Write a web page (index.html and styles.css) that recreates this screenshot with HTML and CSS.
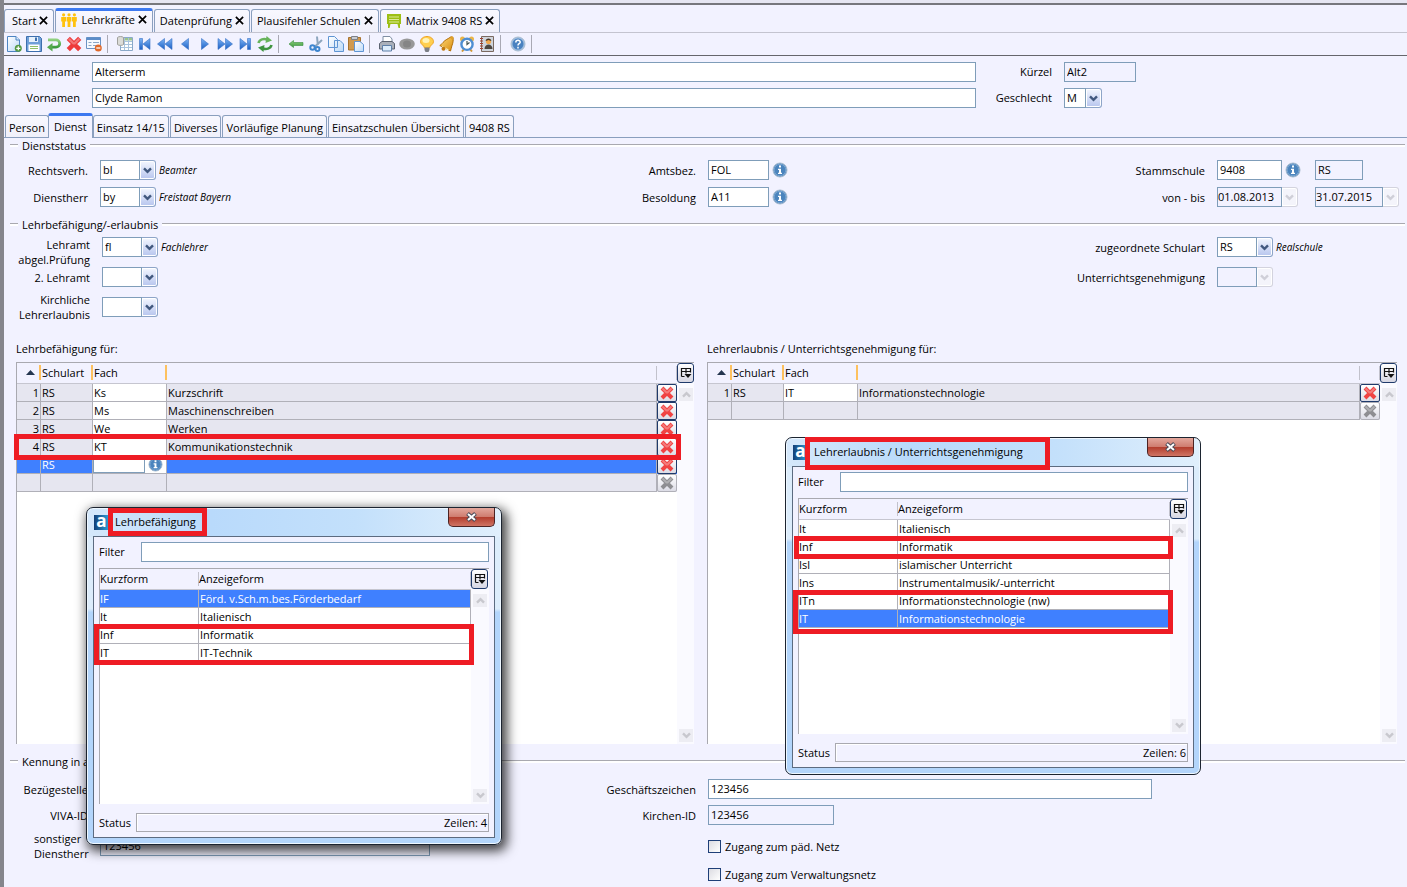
FILE: index.html
```html
<!DOCTYPE html>
<html lang="de">
<head>
<meta charset="utf-8">
<title>Lehrkräfte</title>
<link rel="stylesheet" href="styles.css">
</head>
<body>
<svg class="defs" aria-hidden="true">
  <defs>
    <linearGradient id="g-blue" x1="0" y1="0" x2="0" y2="1"><stop offset="0" stop-color="#7db4f5"/><stop offset="1" stop-color="#1a5fc4"/></linearGradient>
    <linearGradient id="g-page" x1="0" y1="0" x2="1" y2="1"><stop offset="0" stop-color="#ffffff"/><stop offset="1" stop-color="#bcd9f7"/></linearGradient>
    <linearGradient id="g-green" x1="0" y1="0" x2="0" y2="1"><stop offset="0" stop-color="#8fd07e"/><stop offset="1" stop-color="#3a9a3c"/></linearGradient>
    <linearGradient id="g-gold" x1="0" y1="0" x2="1" y2="1"><stop offset="0" stop-color="#ffdc7a"/><stop offset="1" stop-color="#d98a0c"/></linearGradient>
    <symbol id="chev" viewBox="0 0 9 7"><path d="M1 1.3 4.5 4.8 8 1.3" fill="none" stroke="currentColor" stroke-width="2.4"/></symbol>
    <symbol id="close" viewBox="0 0 10 10"><path d="M1 1 9 9M9 1 1 9" stroke="#000" stroke-width="1.9"/></symbol>
    <symbol id="redx" viewBox="0 0 14 14"><path d="M2 2 12 12M12 2 2 12" stroke="currentColor" stroke-width="4"/><path d="M2.5 2.5 7 7M11.5 2.5 7 7" stroke="#fff" stroke-opacity=".3" stroke-width="2"/></symbol>
    <symbol id="cols" viewBox="0 0 12 12"><path d="M1.5 9.5v-8h9v4M1.5 4.5h9M6 1.5v5M1.5 9.5h3" fill="none" stroke="#111" stroke-width="1.2"/><path d="M4.5 7h7L8 11z" fill="#111"/></symbol>
    <symbol id="info" viewBox="0 0 16 16"><circle cx="8" cy="8" r="7" fill="#4b84bd" stroke="#a9bccf"/><circle cx="8" cy="8" r="5.8" fill="none" stroke="#7fa9d4" stroke-width=".8"/><path d="M7 3.5h2v2H7zM6 6.7h3v4h1v1.2H6v-1.2h1V8H6z" fill="#fff"/></symbol>
    <symbol id="sort" viewBox="0 0 9 5"><path d="M0 5 4.5 0 9 5z" fill="#25364f"/></symbol>
    <symbol id="people" viewBox="0 0 16 14"><g fill="#ffc20e"><circle cx="2.6" cy="1.8" r="1.6"/><circle cx="8" cy="1.8" r="1.6"/><circle cx="13.4" cy="1.8" r="1.6"/><path d="M.2 4h4.8v4.5H4V14H1.2V8.500H.2zM5.600 4h4.800v4.500h-1V14H6.600V8.500h-1zM11 4h4.800v4.500h-1V14H12V8.500h-1z"/></g></symbol>
    <symbol id="board" viewBox="0 0 16 14"><path d="M1 0h14v10H1zM2 10h2.500l-1 4H2zM11.500 10H14v4h-1.500z" fill="#9dbf15"/><path d="M3 3h10M3 5.500h10M3 8h10" stroke="#dcea9a"/></symbol>
    <symbol id="new" viewBox="0 0 16 16"><path d="M1.500.5h8.500l3.500 3.500v11.500h-12z" fill="url(#g-page)" stroke="#4d84c2"/><path d="M10 .5V4h3.500" fill="#dcecfb" stroke="#4d84c2"/><circle cx="12.300" cy="12.300" r="3.500" fill="#559a43"/><path d="M12.300 10.300v4M10.300 12.300h4" stroke="#fff" stroke-width="1.200"/></symbol>
    <symbol id="save" viewBox="0 0 16 16"><path d="M.5.500h13l2 2v13H.5z" fill="#6f9fd8" stroke="#3d6fae"/><path d="M3 1h9v5H3z" fill="#e6f0fb"/><path d="M9 1.500h2v3.500H9z" fill="#3d6fae"/><path d="M2.500 8.500h11V15h-11z" fill="#fff"/><path d="M4 10.500h8M4 12.500h8" stroke="#8fc06a"/></symbol>
    <symbol id="undo" viewBox="0 0 16 16"><path d="M2 3.800h8a3.400 3.400 0 0 1 0 7.400H5" fill="none" stroke="url(#g-green)" stroke-width="2.800"/><path d="M6.500 7v8.500L1 11.200z" fill="#55a94f"/></symbol>
    <symbol id="form" viewBox="0 0 16 16"><path d="M.5 1.500h14v11H.5z" fill="#f6f9fd" stroke="#6a93c4"/><path d="M.5 1.500h14v2.500H.5z" fill="#5b8cc8"/><path d="M2.500 6.500h3M7 6.500h6M2.500 9.500h3M7 9.500h4" stroke="#8aa6c6"/><circle cx="12.300" cy="12" r="3.500" fill="#e0692a"/><path d="M10.300 12h4" stroke="#fff" stroke-width="1.300"/></symbol>
    <symbol id="sheet" viewBox="0 0 16 16"><path d="M3.500 1.500h12v13h-12z" fill="#fff" stroke="#8aa9c9"/><path d="M8 2h7v2.500H8z" fill="#9cc58c"/><path d="M4 5.500h11M4 8.500h11M4 11.500h11M7.500 2v12M11.500 2v12" stroke="#a9c3dd"/><path d="M.5 1.500c1-1.300 5-1.300 6 0v7c-1 1.200-5 1.200-6 0z" fill="#dcdcd8" stroke="#a0a09c"/></symbol>
    <symbol id="first" viewBox="0 0 16 16"><path d="M2.500 2.500h3v11h-3zM13 2.500v11L6 8z" fill="url(#g-blue)" stroke="#3771c4" stroke-width=".6"/></symbol>
    <symbol id="rew" viewBox="0 0 16 16"><path d="M7.500 2.500v11L.5 8zM15 2.500v11L8 8z" fill="url(#g-blue)" stroke="#3771c4" stroke-width=".6"/></symbol>
    <symbol id="prev" viewBox="0 0 16 16"><path d="M11.500 2.500v11L4.500 8z" fill="url(#g-blue)" stroke="#3771c4" stroke-width=".6"/></symbol>
    <symbol id="next" viewBox="0 0 16 16"><path d="M4.500 2.500v11L11.500 8z" fill="url(#g-blue)" stroke="#3771c4" stroke-width=".6"/></symbol>
    <symbol id="fwd" viewBox="0 0 16 16"><path d="M1 2.500v11L8 8zM8.500 2.500v11l7-5.500z" fill="url(#g-blue)" stroke="#3771c4" stroke-width=".6"/></symbol>
    <symbol id="last" viewBox="0 0 16 16"><path d="M3 2.500v11L10 8zM10.500 2.500h3v11h-3z" fill="url(#g-blue)" stroke="#3771c4" stroke-width=".6"/></symbol>
    <symbol id="refresh" viewBox="0 0 16 16"><path d="M1.500 7C2.500 3 7 2.500 10 3.500" fill="none" stroke="#68b35c" stroke-width="2.600"/><path d="M9.500 0 15 4.500 8.500 7z" fill="#68b35c"/><path d="M14.500 9c-1 4-5.500 4.500-8.500 3.500" fill="none" stroke="#3f9440" stroke-width="2.600"/><path d="M6.500 16 1 11.500 7.500 9z" fill="#3f9440"/></symbol>
    <symbol id="back" viewBox="0 0 16 16"><path d="M1 8 5.500 4.500v2H15v3H5.500v2z" fill="url(#g-green)" stroke="#3b8f3f" stroke-width=".6"/></symbol>
    <symbol id="cut" viewBox="0 0 16 16"><path d="M9 .5 9.800 9M14 4 7 10.500" stroke="#8da5bd" stroke-width="2"/><circle cx="4.500" cy="11.500" r="2.200" fill="none" stroke="#3f86cf" stroke-width="2"/><circle cx="9.500" cy="13" r="2" fill="none" stroke="#3f86cf" stroke-width="2"/></symbol>
    <symbol id="copy" viewBox="0 0 16 16"><path d="M.5.500h6l3 3v8h-9zM6.500 4.500h5.500l3.500 3.500v7.500h-9z" fill="url(#g-page)" stroke="#5f95d3"/></symbol>
    <symbol id="paste" viewBox="0 0 16 16"><path d="M.5 1.500h12v12.500H.5z" fill="#d09a4f" stroke="#a8742f"/><path d="M3.500.5h6v3h-6z" fill="#c9ccd2" stroke="#7d8087"/><path d="M6.500 5.500h5.500l3.500 3v7h-9z" fill="url(#g-page)" stroke="#5f95d3"/></symbol>
    <symbol id="print" viewBox="0 0 16 16"><path d="M4 .5h7l2 2.500v4H4z" fill="#fff" stroke="#7f8fa3"/><path d="M.500 7.500 3 5.500h10l2.500 2v5.500H.500z" fill="#aab0ba" stroke="#5b6270"/><path d="M3.500 9.500h9v5.500h-9z" fill="#dcecfb" stroke="#5f80a8"/></symbol>
    <symbol id="oval" viewBox="0 0 16 16"><ellipse cx="8" cy="8" rx="7.800" ry="5.500" fill="#989898"/><ellipse cx="8" cy="8" rx="4" ry="3.500" fill="#858585"/></symbol>
    <symbol id="bulb" viewBox="0 0 16 16"><path d="M8 .5c4 0 6.500 2.500 6.500 5.200C14.500 8.500 11 9 10.500 12h-5C5 9 1.500 8.500 1.500 5.700 1.500 3 4 .5 8 .5z" fill="#ffcf4f" stroke="#eea426"/><ellipse cx="7" cy="4.500" rx="3.500" ry="2.500" fill="#fff3b8"/><path d="M5.500 11.500h5V14L9.500 16h-3l-1-2z" fill="#7c7f86"/></symbol>
    <symbol id="bell" viewBox="0 0 16 16"><path d="M12 .8C9 3 6.500 3.500 4 6.500 3 8 2 8.500.8 9.500L11.500 15c.8-1.500.5-3 1.300-5C14 7 14.500 4.500 14 1.500z" fill="url(#g-gold)" stroke="#b36f08"/><circle cx="13" cy="1.800" r="1.500" fill="#e0a02a"/><path d="M3 10.500 9.500 14" stroke="#fff0b0" stroke-width="1.200"/><circle cx="4.500" cy="12.800" r="2" fill="#c27a10"/></symbol>
    <symbol id="clock" viewBox="0 0 16 16"><circle cx="3.500" cy="3" r="2.500" fill="#eab548"/><circle cx="12.500" cy="3" r="2.500" fill="#eab548"/><path d="M3 15.500 5 13M13 15.500 11 13" stroke="#d09838" stroke-width="2"/><circle cx="8" cy="8.300" r="5.600" fill="#fff" stroke="#4e8ed2" stroke-width="2.400"/><path d="M8 5v3.500l2.500-2" fill="none" stroke="#455" stroke-width="1.200"/></symbol>
    <symbol id="contact" viewBox="0 0 16 16"><path d="M2.500.5h12v15h-12z" fill="#cfd4dc" stroke="#7a6960"/><path d="M1 2.500h3M1 5h3M1 7.500h3M1 10h3M1 12.500h3" stroke="#a0412f"/><circle cx="9.500" cy="5.500" r="2.600" fill="#f0a850"/><path d="M6.700 5C6.500 1.500 12.500 1.500 12.300 5L9.500 4z" fill="#432"/><path d="M5.500 13c0-6 8-6 8 0z" fill="#4d4641"/></symbol>
    <symbol id="help" viewBox="0 0 16 16"><circle cx="8" cy="8" r="7" fill="#9dbde0" stroke="#a9bccf"/><circle cx="8" cy="8" r="5.500" fill="#4a82c0"/><path d="M5.800 6.500c0-3 4.600-2.800 4.400-.2C10.100 7.800 8 7.700 8 9.500M8 10.800v1.700" fill="none" stroke="#fff" stroke-width="1.500"/></symbol>
  </defs>
</svg>

<div class="app">
  <nav class="tabs main-tabs">
    <button class="tab">Start<svg class="x"><use href="#close"/></svg></button>
    <button class="tab active"><svg class="tab-icon"><use href="#people"/></svg>Lehrkräfte<svg class="x"><use href="#close"/></svg></button>
    <button class="tab">Datenprüfung<svg class="x"><use href="#close"/></svg></button>
    <button class="tab">Plausifehler Schulen<svg class="x"><use href="#close"/></svg></button>
    <button class="tab"><svg class="tab-icon"><use href="#board"/></svg>Matrix 9408 RS<svg class="x"><use href="#close"/></svg></button>
  </nav>

  <div class="toolbar" role="toolbar">
    <button aria-label="Neu"><svg><use href="#new"/></svg></button>
    <button aria-label="Speichern"><svg><use href="#save"/></svg></button>
    <button aria-label="Rückgängig"><svg><use href="#undo"/></svg></button>
    <button aria-label="Löschen" class="red"><svg><use href="#redx"/></svg></button>
    <button aria-label="Maske leeren"><svg><use href="#form"/></svg></button>
    <span class="sep"></span>
    <button aria-label="Liste"><svg><use href="#sheet"/></svg></button>
    <button aria-label="Erster"><svg><use href="#first"/></svg></button>
    <button aria-label="Seite zurück"><svg><use href="#rew"/></svg></button>
    <button aria-label="Voriger"><svg><use href="#prev"/></svg></button>
    <button aria-label="Nächster"><svg><use href="#next"/></svg></button>
    <button aria-label="Seite vor"><svg><use href="#fwd"/></svg></button>
    <button aria-label="Letzter"><svg><use href="#last"/></svg></button>
    <button aria-label="Aktualisieren"><svg><use href="#refresh"/></svg></button>
    <span class="sep"></span>
    <button aria-label="Zurück"><svg><use href="#back"/></svg></button>
    <button aria-label="Ausschneiden"><svg><use href="#cut"/></svg></button>
    <button aria-label="Kopieren"><svg><use href="#copy"/></svg></button>
    <button aria-label="Einfügen"><svg><use href="#paste"/></svg></button>
    <span class="sep"></span>
    <button aria-label="Drucken"><svg><use href="#print"/></svg></button>
    <button aria-label="Ansicht"><svg><use href="#oval"/></svg></button>
    <button aria-label="Hinweis"><svg><use href="#bulb"/></svg></button>
    <button aria-label="Glocke"><svg><use href="#bell"/></svg></button>
    <button aria-label="Wecker"><svg><use href="#clock"/></svg></button>
    <button aria-label="Kontakte"><svg><use href="#contact"/></svg></button>
    <span class="sep"></span>
    <button aria-label="Hilfe"><svg><use href="#help"/></svg></button>
    <span class="sep"></span>
  </div>

  <div class="person">
    <label for="fam">Familienname</label><input id="fam" value="Alterserm">
    <label for="krz">Kürzel</label><input id="krz" class="ro w72" value="Alt2" readonly>
    <label for="vor">Vornamen</label><input id="vor" value="Clyde Ramon">
    <label for="ges">Geschlecht</label>
    <span class="combo small"><select id="ges"><option>M</option></select><span class="arrow"><svg><use href="#chev"/></svg></span></span>
  </div>

  <nav class="tabs sub-tabs">
    <button class="tab">Person</button>
    <button class="tab active">Dienst</button>
    <button class="tab">Einsatz 14/15</button>
    <button class="tab">Diverses</button>
    <button class="tab">Vorläufige Planung</button>
    <button class="tab">Einsatzschulen Übersicht</button>
    <button class="tab">9408 RS</button>
  </nav>

  <h2 class="legend">Dienststatus</h2>
  <div class="form status">
    <label for="rv">Rechtsverh.</label>
    <div class="field"><span class="combo"><select id="rv"><option>bl</option></select><span class="arrow"><svg><use href="#chev"/></svg></span></span><i>Beamter</i></div>
    <label for="amt">Amtsbez.</label>
    <div class="field"><input id="amt" class="w61" value="FOL"><button class="info" aria-label="Info"><svg><use href="#info"/></svg></button></div>
    <label for="stamm">Stammschule</label>
    <div class="field dates"><div><input id="stamm" class="w65" value="9408"><button class="info" aria-label="Info"><svg><use href="#info"/></svg></button></div><input class="ro w48" aria-label="Schulart" value="RS" readonly></div>
    <label for="dh">Dienstherr</label>
    <div class="field"><span class="combo"><select id="dh"><option>by</option></select><span class="arrow"><svg><use href="#chev"/></svg></span></span><i>Freistaat Bayern</i></div>
    <label for="bes">Besoldung</label>
    <div class="field"><input id="bes" class="w61" value="A11"><button class="info" aria-label="Info"><svg><use href="#info"/></svg></button></div>
    <label for="von">von - bis</label>
    <div class="field dates">
      <span class="combo off date"><select id="von" disabled><option>01.08.2013</option></select><span class="arrow"><svg><use href="#chev"/></svg></span></span>
      <span class="combo off date until"><select aria-label="bis" disabled><option>31.07.2015</option></select><span class="arrow"><svg><use href="#chev"/></svg></span></span>
    </div>
  </div>

  <h2 class="legend">Lehrbefähigung/-erlaubnis</h2>
  <div class="form teach">
    <label for="la1">Lehramt<br>abgel.Prüfung</label>
    <div class="field"><span class="combo"><select id="la1"><option>fl</option></select><span class="arrow"><svg><use href="#chev"/></svg></span></span><i>Fachlehrer</i></div>
    <label for="zs" class="c5">zugeordnete Schulart</label>
    <div class="field"><span class="combo"><select id="zs"><option>RS</option></select><span class="arrow"><svg><use href="#chev"/></svg></span></span><i>Realschule</i></div>
    <label for="la2" class="second">2. Lehramt</label>
    <div class="field"><span class="combo"><select id="la2"><option></option></select><span class="arrow"><svg><use href="#chev"/></svg></span></span></div>
    <label for="ug" class="c5">Unterrichtsgenehmigung</label>
    <div class="field"><span class="combo off"><select id="ug" disabled><option></option></select><span class="arrow"><svg><use href="#chev"/></svg></span></span></div>
    <label for="kl" class="church">Kirchliche<br>Lehrerlaubnis</label>
    <div class="field church"><span class="combo"><select id="kl"><option></option></select><span class="arrow"><svg><use href="#chev"/></svg></span></span></div>
  </div>

  <div class="panels">
    <section class="panel">
      <h3>Lehrbefähigung für:</h3>
      <div class="list">
        <div class="rows">
          <table class="grid">
            <colgroup><col class="k1"><col class="k2"><col class="k3"><col><col class="k5"></colgroup>
            <thead><tr><th class="mark sort"><svg><use href="#sort"/></svg></th><th class="mark">Schulart</th><th class="mark">Fach</th><th class="thin"></th><th class="thin"></th></tr></thead>
            <tbody>
              <tr><td class="n">1</td><td>RS</td><td class="w">Ks</td><td>Kurzschrift</td><td class="d"><button class="del" aria-label="Löschen"><svg><use href="#redx"/></svg></button></td></tr>
              <tr><td class="n">2</td><td>RS</td><td class="w">Ms</td><td>Maschinenschreiben</td><td class="d"><button class="del" aria-label="Löschen"><svg><use href="#redx"/></svg></button></td></tr>
              <tr><td class="n">3</td><td>RS</td><td class="w">We</td><td>Werken</td><td class="d"><button class="del" aria-label="Löschen"><svg><use href="#redx"/></svg></button></td></tr>
              <tr><td class="n">4</td><td>RS</td><td class="w">KT</td><td>Kommunikationstechnik</td><td class="d"><button class="del" aria-label="Löschen"><svg><use href="#redx"/></svg></button></td></tr>
              <tr class="sel"><td class="n"></td><td>RS</td><td class="w edit"><div><input aria-label="Fach"><button class="info" aria-label="Info"><svg><use href="#info"/></svg></button></div></td><td></td><td class="d"><button class="del" aria-label="Löschen"><svg><use href="#redx"/></svg></button></td></tr>
              <tr><td class="n"></td><td></td><td></td><td></td><td class="d"><button class="del grey" aria-label="Löschen" disabled><svg><use href="#redx"/></svg></button></td></tr>
            </tbody>
          </table>
        </div>
        <div class="side"><button class="colbtn" aria-label="Spalten"><svg><use href="#cols"/></svg></button><button class="sb up" aria-label="Nach oben"><svg><use href="#chev"/></svg></button><button class="sb" aria-label="Nach unten"><svg><use href="#chev"/></svg></button></div>
        <span class="frame f-row4"></span>
      </div>
    </section>
    <section class="panel">
      <h3>Lehrerlaubnis / Unterrichtsgenehmigung für:</h3>
      <div class="list">
        <div class="rows">
          <table class="grid">
            <colgroup><col class="k1"><col class="k2"><col class="k3"><col><col class="k5"></colgroup>
            <thead><tr><th class="mark sort"><svg><use href="#sort"/></svg></th><th class="mark">Schulart</th><th class="mark">Fach</th><th class="thin"></th><th class="thin"></th></tr></thead>
            <tbody>
              <tr><td class="n">1</td><td>RS</td><td class="w">IT</td><td>Informationstechnologie</td><td class="d"><button class="del" aria-label="Löschen"><svg><use href="#redx"/></svg></button></td></tr>
              <tr><td class="n"></td><td></td><td></td><td></td><td class="d"><button class="del grey" aria-label="Löschen" disabled><svg><use href="#redx"/></svg></button></td></tr>
            </tbody>
          </table>
        </div>
        <div class="side"><button class="colbtn" aria-label="Spalten"><svg><use href="#cols"/></svg></button><button class="sb up" aria-label="Nach oben"><svg><use href="#chev"/></svg></button><button class="sb" aria-label="Nach unten"><svg><use href="#chev"/></svg></button></div>
      </div>
    </section>
  </div>

  <h2 class="legend">Kennung in anderen Systemen</h2>
  <div class="form ids">
    <label for="bz" class="c1">Bezügestelle</label><div class="field"><input id="bz" class="w330"></div>
    <label for="gz">Geschäftszeichen</label><div class="field wide"><input id="gz" value="123456"></div>
    <label for="viva" class="c1">VIVA-ID</label><div class="field"><input id="viva" class="w330"></div>
    <label for="kid">Kirchen-ID</label><div class="field"><input id="kid" class="ro w126" value="123456" readonly></div>
    <label for="sd" class="c1 left">sonstiger<br>Dienstherr</label><div class="field"><input id="sd" class="ro w330" value="123456" readonly></div>
    <label class="check"><input type="checkbox">Zugang zum päd. Netz</label>
    <label class="check"><input type="checkbox">Zugang zum Verwaltungsnetz</label>
  </div>
</div>

<section class="dialog d1" role="dialog" aria-label="Lehrbefähigung">
  <header><span class="logo">a</span><span class="title">Lehrbefähigung</span><button class="winx" aria-label="Schließen"><svg viewBox="0 0 12 10"><path d="M2 1.500 10 8.500M10 1.500 2 8.500" stroke="#4b4b58" stroke-width="4"/><path d="M2.500 2 9.500 8M9.500 2 2.500 8" stroke="#fff" stroke-width="2"/></svg></button></header>
  <div class="inner">
    <div class="filter"><label for="f1">Filter</label><input id="f1"></div>
    <div class="list">
      <div class="rows">
        <table class="grid pick">
          <colgroup><col class="p1"><col></colgroup>
          <thead><tr><th class="thin">Kurzform</th><th class="thin">Anzeigeform</th></tr></thead>
          <tbody>
            <tr class="sel"><td>IF</td><td>Förd. v.Sch.m.bes.Förderbedarf</td></tr>
            <tr><td>It</td><td>Italienisch</td></tr>
            <tr><td>Inf</td><td>Informatik</td></tr>
            <tr><td>IT</td><td>IT-Technik</td></tr>
          </tbody>
        </table>
      </div>
      <div class="side"><button class="colbtn" aria-label="Spalten"><svg><use href="#cols"/></svg></button><button class="sb up" aria-label="Nach oben"><svg><use href="#chev"/></svg></button><button class="sb" aria-label="Nach unten"><svg><use href="#chev"/></svg></button></div>
      <span class="frame f-two"></span>
    </div>
    <div class="statusbar"><span>Status</span><output>Zeilen: 4</output></div>
  </div>
</section>

<section class="dialog d2" role="dialog" aria-label="Lehrerlaubnis / Unterrichtsgenehmigung">
  <header><span class="logo">a</span><span class="title">Lehrerlaubnis / Unterrichtsgenehmigung</span><button class="winx" aria-label="Schließen"><svg viewBox="0 0 12 10"><path d="M2 1.500 10 8.500M10 1.500 2 8.500" stroke="#4b4b58" stroke-width="4"/><path d="M2.500 2 9.500 8M9.500 2 2.500 8" stroke="#fff" stroke-width="2"/></svg></button></header>
  <div class="inner">
    <div class="filter"><label for="f2">Filter</label><input id="f2"></div>
    <div class="list">
      <div class="rows">
        <table class="grid pick">
          <colgroup><col class="p1"><col></colgroup>
          <thead><tr><th class="thin">Kurzform</th><th class="thin">Anzeigeform</th></tr></thead>
          <tbody>
            <tr><td>It</td><td>Italienisch</td></tr>
            <tr><td>Inf</td><td>Informatik</td></tr>
            <tr><td>Isl</td><td>islamischer Unterricht</td></tr>
            <tr><td>Ins</td><td>Instrumentalmusik/-unterricht</td></tr>
            <tr><td>ITn</td><td>Informationstechnologie (nw)</td></tr>
            <tr class="sel"><td>IT</td><td>Informationstechnologie</td></tr>
          </tbody>
        </table>
      </div>
      <div class="side"><button class="colbtn" aria-label="Spalten"><svg><use href="#cols"/></svg></button><button class="sb up" aria-label="Nach oben"><svg><use href="#chev"/></svg></button><button class="sb" aria-label="Nach unten"><svg><use href="#chev"/></svg></button></div>
      <span class="frame f-inf"></span>
      <span class="frame f-it"></span>
    </div>
    <div class="statusbar"><span>Status</span><output>Zeilen: 6</output></div>
  </div>
</section>
</body>
</html>
```
FILE: styles.css
```css
* { box-sizing: border-box; }
body {
  margin: 0;
  background: #f2f2ff;
  color: #000;
  font: 11px/15px "Open Sans", "Noto Sans", sans-serif;
}
button, input, select { font: inherit; color: inherit; margin: 0; }
button { padding: 0; border: 0; background: none; display: flex; align-items: center; justify-content: center; white-space: nowrap; }
.defs { position: absolute; width: 0; height: 0; }
h2, h3 { margin: 0; font: inherit; }

.app {
  display: flex;
  flex-direction: column;
  min-height: 100vh;
  padding-top: 4px;
  border-left: 4px solid #85858c;
  background: linear-gradient(#e6e6f2 0 3px, #77777d 3px 5px, transparent 5px);
}

/* tabs */
.tabs { display: flex; align-items: flex-end; gap: 1px; }
.tab {
  border: 1px solid #8a9fbe;
  border-bottom: 0;
  border-radius: 3px 3px 0 0;
  background: linear-gradient(#f8f8ff, #f0f0fa);
}
.tab.active { border-top: 3px solid #3c78f0; }
.main-tabs { height: 29px; border-bottom: 1px solid #c4c4d0; }
.main-tabs .tab { height: 23px; padding: 0 5px 1px; }
.main-tabs .tab:first-child { padding-left: 7px; }
.main-tabs .tab.active { height: 24px; padding-bottom: 4px; }
.tab .x { width: 9px; height: 9px; margin-left: 3px; }
.tab-icon { width: 16px; height: 14px; margin-right: 4px; }
.sub-tabs { height: 30px; padding-left: 1px; border-bottom: 1px solid #8a9fbe; }
.sub-tabs .tab { height: 22px; padding: 1px 3px 0; }
.sub-tabs .tab.active { height: 25px; padding: 0 5px 2px; margin: 0 -1px -1px -2px; background: #f2f2ff; }

/* toolbar */
.toolbar { display: flex; align-items: center; height: 23px; border-bottom: 1px solid #66666c; }
.toolbar button { width: 20px; height: 20px; }
.toolbar svg { width: 16px; height: 16px; }
.toolbar .sep { width: 1px; height: 18px; margin: 0 7px 0 3px; background: #a9a9b4; }
.red { color: #ee3b3b; }

/* fields */
input, select {
  height: 20px;
  padding: 0 2px 2px;
  border: 1px solid #7f9db9;
  border-radius: 0;
  background: #fff;
  min-width: 0;
}
.ro { background: #f2f2ff; }
.combo { display: flex; width: 56px; }
.combo select { flex: 1; appearance: none; opacity: 1; }
.combo.small { width: 38px; }
.combo.date { width: 81px; }
.combo.date.until { width: 84px; }
.arrow {
  display: flex; align-items: center; justify-content: center;
  width: 16px; height: 20px;
  border: 1px solid #8ea5c8;
  border-left: 0;
  border-radius: 0 3px 3px 0;
  background: linear-gradient(#f4f7ff, #b7c5ee);
  box-shadow: inset 0 0 0 1px #fff;
  color: #41587e;
}
.combo.date select { padding: 0 0 2px; }
.arrow svg { width: 9px; height: 7px; }
.off select { background: #f2f2ff; color: #000; }
.off .arrow { border-color: #d3d3de; background: #f4f4fb; color: #cfcfd8; }
.info svg { width: 16px; height: 16px; }
.w48 { width: 48px; } .w61 { width: 61px; } .w65 { width: 65px; }
.w72 { width: 72px; } .w126 { width: 126px; } .w330 { width: 330px; }
i { font-size: 10px; }

.person {
  display: grid;
  grid-template-columns: 76px 1fr 64px 343px;
  gap: 6px 12px;
  align-items: center;
  padding-top: 6px;
}
.person label { text-align: right; white-space: nowrap; padding-bottom: 2px; }
.form label { text-align: right; white-space: nowrap; }

.legend { display: flex; align-items: center; gap: 4px; height: 14px; padding: 0 2px 0 6px; white-space: nowrap; }
.legend::before, .legend::after { content: ""; width: 8px; height: 2px; border-top: 1px solid #a9a9b0; background: #fff; }
.legend::after { flex: 1; }

.form {
  display: grid;
  grid-template-columns: 84px 484fr 100px 345fr 140px 190px;
  gap: 7px 12px;
  align-items: center;
}
.field, .dates > div { display: flex; align-items: center; gap: 3px; }
.dates { gap: 17px; }
.dates > div { width: 81px; }
.dates > div .info { margin-right: -3px; }
.status { padding: 8px 0 10px; }
.teach { grid-template-columns: 86px 482fr 100px 345fr 140px 190px; row-gap: 0; align-items: start; padding: 6px 0 19px; }
.teach .c5 { grid-column: 5; padding-top: 3px; }
.teach .second { padding-top: 3px; }
.teach .church { margin-top: 5px; align-self: center; }

/* lists */
.panels { flex: 1; display: grid; grid-template-columns: 678fr 690fr; gap: 13px; padding: 0 10px 10px 12px; }
.panel { display: flex; flex-direction: column; gap: 6px; }
.list { flex: 1; position: relative; display: flex; border-top: 1px solid #a9a9b0; border-left: 1px solid #a9a9b0; }
.rows { flex: 1; background: #fff; }
.side { width: 17px; display: flex; flex-direction: column; align-items: flex-start; background: #fafaff; padding-bottom: 2px; }
.colbtn { width: 17px; height: 20px; border: 1px solid #1f3a6b; border-radius: 3px; background: linear-gradient(#fff, #d6d6e2); }
.colbtn svg { width: 12px; height: 12px; }
.sb { width: 14px; height: 13px; margin-left: 2px; background: #ededf3; color: #c8c8ce; }
.sb svg { width: 9px; height: 7px; }
.sb.up { margin: 5px 0 auto 2px; }
.sb.up svg { transform: rotate(180deg); }

.grid { width: 100%; table-layout: fixed; border-collapse: separate; border-spacing: 0; }
.k1 { width: 24px; } .k2 { width: 52px; } .k3 { width: 74px; } .k5 { width: 20px; } .p1 { width: 99px; }
.grid th { height: 21px; padding: 0 1px 2px; font-weight: normal; text-align: left; background: #f2f2ff; border-bottom: 1px solid #c6c6d0; white-space: nowrap; }
.grid td { height: 18px; padding: 0 1px; line-height: 15px; background: #e6e6f0; border-right: 1px solid #b0b0b8; border-bottom: 1px solid #b0b0b8; white-space: nowrap; }
.grid th.mark { background: linear-gradient(#fdc15f, #fdc15f) right 2px / 2px 15px no-repeat #f2f2ff; }
.grid th.thin { background: linear-gradient(#c2c2cc, #c2c2cc) right 3px / 1px 14px no-repeat #f2f2ff; }
.sort svg { display: block; width: 9px; height: 5px; margin-left: 8px; }
.grid td.n { text-align: right; }
.grid td.w, .pick td { background: #fff; }
.pick td, .pick th { padding-left: 0; padding-right: 0; }
.pick td + td { padding-left: 1px; }
.grid .sel td { background: #3f80ff; color: #fff; }
.grid td.d, .grid td.edit { padding: 0; }
.grid .sel td.edit { background: #fff; color: #000; }
.edit div { display: flex; gap: 3px; }
.edit input { width: 52px; height: 17px; }
.edit .info svg { width: 15px; height: 15px; }
.grid td.d { border-right: 0; border-bottom: 0; }
.del { width: 100%; height: 18px; border: 1px solid #1f3a6b; border-radius: 2px; background: linear-gradient(#fff, #dcdce6); color: #f04343; }
.del svg { width: 14px; height: 14px; }
.del.grey { border-color: #b0b0b8; color: #8e8e92; }

.frame { position: absolute; border: 5px solid #ee1c24; }
.f-row4 { left: -3px; right: 13px; top: 71px; height: 26px; }
.f-two { left: -6px; right: 15px; top: 54px; height: 41px; }
.f-inf { left: -5px; right: 15px; top: 36px; height: 23px; }
.f-it { left: -6px; right: 15px; top: 90px; height: 44px; }

.ids { row-gap: 6px; padding: 11px 0 5px; }
.ids .c1 { grid-column: 1; }
.ids .left { text-align: left; padding-left: 30px; }
.ids .wide { grid-column: 4 / 6; }
.ids .wide input { flex: 0 1 444px; }
.ids .check { grid-column: 4; display: flex; align-items: center; gap: 4px; text-align: left; }
.check input { appearance: none; width: 13px; height: 13px; padding: 0; border: 1px solid #1f3f78; background: linear-gradient(135deg, #dcdce2, #fff); }

/* floating windows */
.dialog {
  position: absolute;
  width: 416px;
  height: 338px;
  display: flex;
  flex-direction: column;
  padding: 0 6px 6px;
  border: 1px solid #1c2430;
  border-radius: 7px;
  background: linear-gradient(90deg, #d5e8fb, #b9dafb 30%, #c3e0fb 65%, #e0effc) top / 100% 29px no-repeat, linear-gradient(#dcecfb 30%, #b3d5fb 31%);
  box-shadow: inset 0 0 0 1px #eef7ff;
}
.d1 { left: 86px; top: 507px; box-shadow: inset 0 0 0 1px #eef7ff, 3px 4px 12px 2px rgba(0, 0, 0, .75); }
.d2 { left: 785px; top: 437px; }
.dialog header { display: flex; align-items: flex-start; height: 28px; }
.logo {
  width: 15px; height: 15px; margin: 7px 6px 0 1px;
  background: linear-gradient(90deg, #123f77, #2fa0dc);
  color: #fff; font: bold 17px/12px "Open Sans", sans-serif; text-align: center;
}
.title { position: relative; margin-top: 6px; }
.title::after { content: ""; position: absolute; inset: -6px -11px -7px -7px; border: 5px solid #ee1c24; }
.d2 .title::after { inset: -7px -27px -11px -9px; }
.winx { width: 47px; height: 19px; margin-left: auto; border: 1px solid #4c2323; border-top: 0; border-radius: 0 0 5px 5px; background: linear-gradient(#e3a79c, #cf7d70 48%, #b23c2c 50%, #cf7464); }
.winx svg { width: 13px; height: 10px; }
.inner { flex: 1; display: flex; flex-direction: column; border: 1px solid #5c6b80; background: #f2f2ff; padding: 5px; }
.filter { display: flex; align-items: center; }
.filter label { width: 42px; padding-bottom: 2px; }
.filter input { flex: 1; height: 20px; }
.dialog .list { margin: 6px 0 9px; }
.dialog .side { width: 18px; }
.dialog .f-two { top: 55px; }
.dialog .f-inf { top: 37px; }
.dialog .f-it { top: 91px; }
.statusbar { display: flex; align-items: center; gap: 5px; }
.statusbar output { flex: 1; height: 19px; border: 1px solid #a9a9b0; box-shadow: inset 1px 1px #fff; text-align: right; line-height: 17px; padding-right: 1px; }
```
